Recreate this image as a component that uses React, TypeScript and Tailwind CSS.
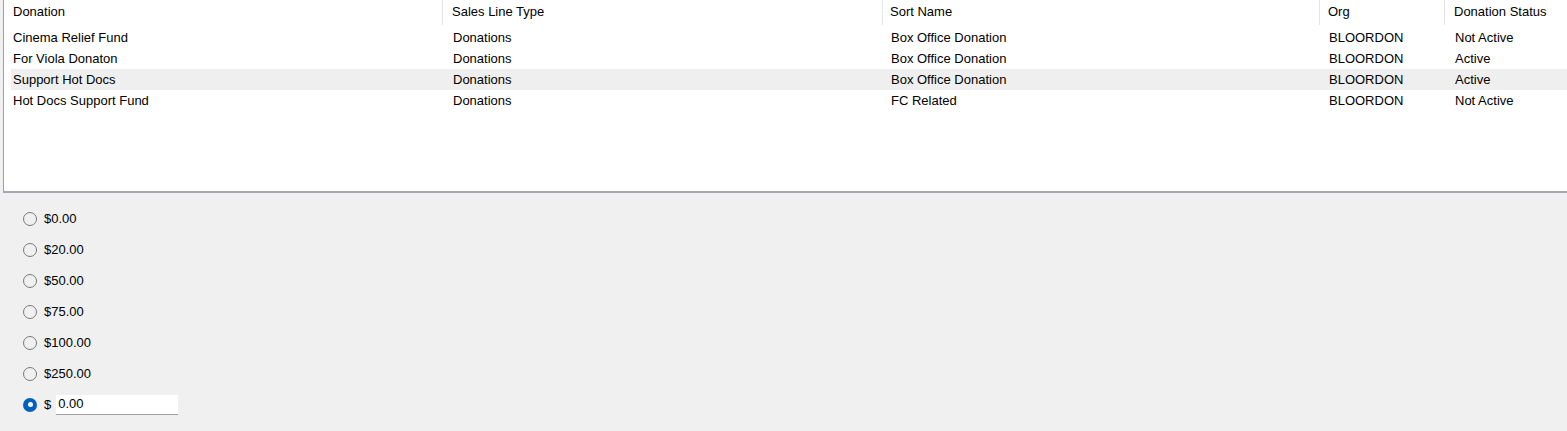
import React from "react";

const rows = [
  { donation: "Cinema Relief Fund", type: "Donations", sort: "Box Office Donation", org: "BLOORDON", status: "Not Active" },
  { donation: "For Viola Donaton", type: "Donations", sort: "Box Office Donation", org: "BLOORDON", status: "Active" },
  { donation: "Support Hot Docs", type: "Donations", sort: "Box Office Donation", org: "BLOORDON", status: "Active", hover: true },
  { donation: "Hot Docs Support Fund", type: "Donations", sort: "FC Related", org: "BLOORDON", status: "Not Active" },
];

const amounts = ["$0.00", "$20.00", "$50.00", "$75.00", "$100.00", "$250.00"];

function Radio({ checked }: { checked?: boolean }) {
  if (checked) {
    return (
      <span className="w-[14px] h-[14px] rounded-full bg-[#0060c0] flex items-center justify-center shrink-0">
        <span className="w-[5px] h-[5px] rounded-full bg-white" />
      </span>
    );
  }
  return <span className="w-[14px] h-[14px] rounded-full border border-[#7a7a7a] bg-[#f0f0f0] shrink-0" />;
}

export default function App() {
  return (
    <div
      className="w-[1567px] h-[431px] bg-[#f0f0f0] overflow-hidden text-[13px] text-black"
      style={{ fontFamily: '"Liberation Sans", Arial, sans-serif' }}
    >
      {/* list view */}
      <div className="ml-[3px] w-[1570px] h-[193px] bg-white border-l border-b-2 border-l-[#a0a0a0] border-b-[#a4a7ad]">
        <div className="flex h-[27px] leading-[15px]">
          <div className="w-[439px] pl-[9px] pt-[4px] border-r border-[#e5e5e5] h-[25px]">Donation</div>
          <div className="w-[440px] pl-[9px] pt-[4px] border-r border-[#e5e5e5] h-[25px]">Sales Line Type</div>
          <div className="w-[437px] pl-[7px] pt-[4px] border-r border-[#e5e5e5] h-[25px]">Sort Name</div>
          <div className="w-[125px] pl-[8px] pt-[4px] border-r border-[#e5e5e5] h-[25px]">Org</div>
          <div className="flex-1 pl-[9px] pt-[4px] h-[25px]">Donation Status</div>
        </div>
        {rows.map((r) => (
          <div key={r.donation} className={`ml-[7px] flex h-[21px] items-center ${r.hover ? "bg-[#efefef]" : ""}`}>
            <div className="w-[432px] pl-[2px]">{r.donation}</div>
            <div className="w-[440px] pl-[10px]">{r.type}</div>
            <div className="w-[437px] pl-[8px]">{r.sort}</div>
            <div className="w-[125px] pl-[9px]">{r.org}</div>
            <div className="flex-1 pl-[10px]">{r.status}</div>
          </div>
        ))}
      </div>

      {/* amount radios */}
      <div className="pt-[10px] pl-[23px] flex flex-col">
        {amounts.map((a) => (
          <div key={a} className="h-[31px] flex items-center gap-[7px]">
            <Radio />
            <span>{a}</span>
          </div>
        ))}
        <div className="h-[31px] flex items-center">
          <Radio checked />
          <span className="ml-[7px]">$</span>
          <div className="ml-[5px] w-[122px] h-[20px] bg-white border-b border-[#a0a0a0] flex items-center pl-[2px]">
            0.00
          </div>
        </div>
      </div>
    </div>
  );
}
